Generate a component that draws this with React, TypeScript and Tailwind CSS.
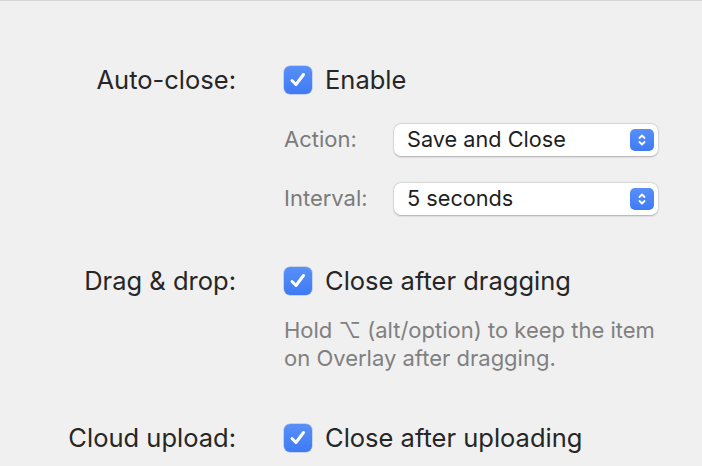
import React from 'react';

function Checkbox() {
  return (
    <div className="w-[28px] h-[28px] rounded-[6px] bg-gradient-to-b from-[#5890f8] to-[#3f7af5] flex items-center justify-center shadow-[0_0_0_0.5px_rgba(40,90,200,0.4)]">
      <svg width="20" height="20" viewBox="0 0 20 20" fill="none">
        <path d="M4 10.5 L8 14.5 L15.5 4.5" stroke="white" strokeWidth="3" strokeLinecap="round" strokeLinejoin="round" />
      </svg>
    </div>
  );
}

function Select({ value }: { value: string }) {
  return (
    <div className="w-[264px] h-[32px] rounded-[7px] bg-white shadow-[0_0.5px_2px_rgba(0,0,0,0.25),0_0_0_0.5px_rgba(0,0,0,0.08)] flex items-center justify-between pl-[13px] pr-[4px]">
      <span className="text-[21.7px] text-[#1f1f1f]">{value}</span>
      <div className="w-[24px] h-[22px] rounded-[5px] bg-gradient-to-b from-[#5890f8] to-[#3f7af5] flex items-center justify-center">
        <svg width="12" height="16" viewBox="0 0 12 16" fill="none">
          <path d="M3.5 6 L6 3.5 L8.5 6" stroke="white" strokeWidth="1.8" strokeLinecap="round" strokeLinejoin="round" />
          <path d="M3.5 10 L6 12.5 L8.5 10" stroke="white" strokeWidth="1.8" strokeLinecap="round" strokeLinejoin="round" />
        </svg>
      </div>
    </div>
  );
}

function Row({ label, children }: { label: string; children: React.ReactNode }) {
  return (
    <div className="flex items-center h-[28px]">
      <div className="w-[236px] text-right text-[25.5px] text-[#262626] whitespace-nowrap">{label}</div>
      <div className="ml-[48px] flex items-center gap-[13px]">{children}</div>
    </div>
  );
}

export default function App() {
  return (
    <div
      className="w-[702px] h-[466px] bg-[#f0f0f0] border-t border-[#d5d5d5] overflow-hidden"
      style={{ fontFamily: 'Inter, "Noto Sans", sans-serif' }}
    >
      <div className="flex flex-col pt-[65px]">
        <Row label="Auto-close:">
          <Checkbox />
          <span className="text-[25.5px] text-[#262626]">Enable</span>
        </Row>

        <div className="ml-[284px] mt-[29px] flex flex-col gap-[26px]">
          <div className="flex items-center">
            <span className="w-[110px] text-[22px] text-[#7b7b7b]">Action:</span>
            <Select value="Save and Close" />
          </div>
          <div className="flex items-center">
            <span className="w-[110px] text-[22px] text-[#7b7b7b]">Interval:</span>
            <Select value="5 seconds" />
          </div>
        </div>

        <div className="mt-[52px]">
          <Row label="Drag & drop:">
            <Checkbox />
            <span className="text-[25.5px] text-[#262626]">Close after dragging</span>
          </Row>
        </div>

        <p className="ml-[284px] mt-[21px] text-[22px] leading-[28px] text-[#808080] whitespace-nowrap">
          Hold ⌥ (alt/option) to keep the item
          <br />
          on Overlay after dragging.
        </p>

        <div className="mt-[52px]">
          <Row label="Cloud upload:">
            <Checkbox />
            <span className="text-[25.5px] text-[#262626]">Close after uploading</span>
          </Row>
        </div>
      </div>
    </div>
  );
}
